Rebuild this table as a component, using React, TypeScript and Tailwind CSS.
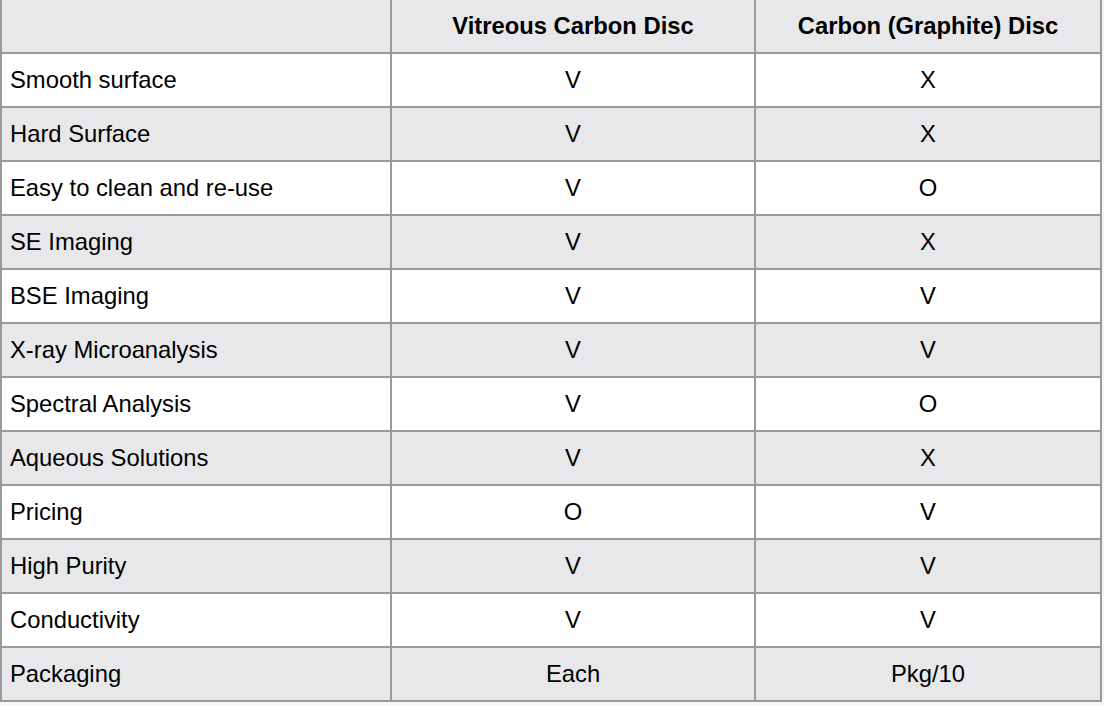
const ROWS: [string, string, string][] = [
  ['Smooth surface', 'V', 'X'],
  ['Hard Surface', 'V', 'X'],
  ['Easy to clean and re-use', 'V', 'O'],
  ['SE Imaging', 'V', 'X'],
  ['BSE Imaging', 'V', 'V'],
  ['X-ray Microanalysis', 'V', 'V'],
  ['Spectral Analysis', 'V', 'O'],
  ['Aqueous Solutions', 'V', 'X'],
  ['Pricing', 'O', 'V'],
  ['High Purity', 'V', 'V'],
  ['Conductivity', 'V', 'V'],
  ['Packaging', 'Each', 'Pkg/10'],
]

export default function App() {
  return (
    <div className="min-h-screen w-full bg-[#f6f6f6] text-black"
      style={{ fontFamily: '"Liberation Sans", Arial, sans-serif' }}>
      <table className="border-separate border-spacing-0 text-[23.8px] w-[1102px] table-fixed">
        <colgroup>
          <col className="w-[392px]" />
          <col className="w-[364px]" />
          <col className="w-[346px]" />
        </colgroup>
        <thead>
          <tr className="bg-[#e8e8eb]">
            <th className="h-[54px] border-l-2 border-r-2 border-b-2 border-[#9b9b9b] p-0" />
            <th className="h-[54px] border-r-2 border-b-2 border-[#9b9b9b] p-0 font-bold text-center align-middle">
              Vitreous Carbon Disc
            </th>
            <th className="h-[54px] border-r-2 border-b-2 border-[#9b9b9b] p-0 font-bold text-center align-middle">
              Carbon (Graphite) Disc
            </th>
          </tr>
        </thead>
        <tbody>
          {ROWS.map(([label, a, b], i) => (
            <tr key={label} className={i % 2 === 0 ? 'bg-white' : 'bg-[#e8e8eb]'}>
              <td className="h-[54px] border-l-2 border-r-2 border-b-2 border-[#9b9b9b] pl-[8px] pr-0 py-0 align-middle">
                {label}
              </td>
              <td className="h-[54px] border-r-2 border-b-2 border-[#9b9b9b] p-0 text-center align-middle">{a}</td>
              <td className="h-[54px] border-r-2 border-b-2 border-[#9b9b9b] p-0 text-center align-middle">{b}</td>
            </tr>
          ))}
        </tbody>
      </table>
    </div>
  )
}
